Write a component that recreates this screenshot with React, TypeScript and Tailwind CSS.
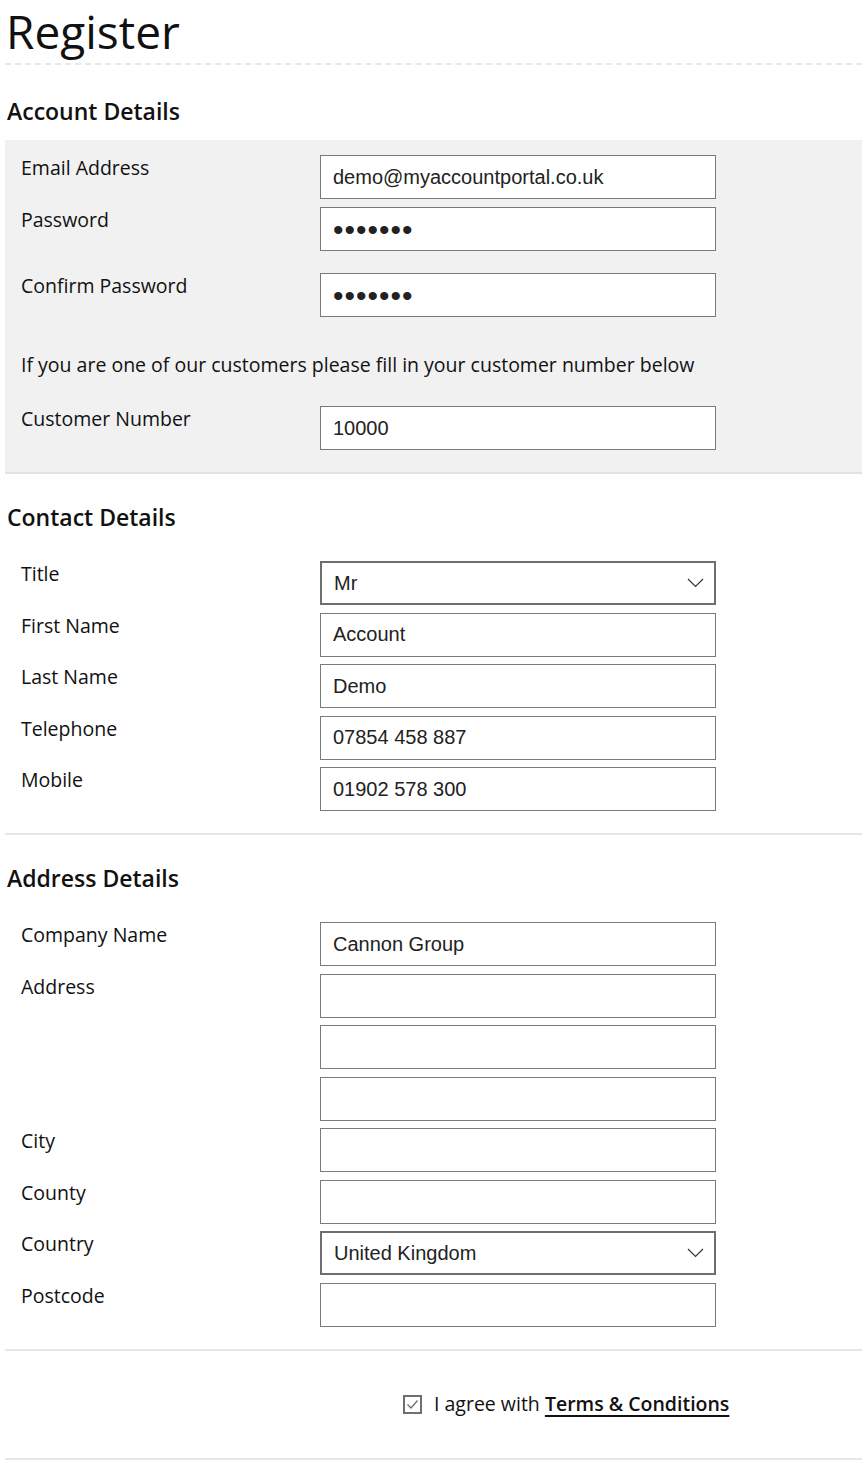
import { useState } from "react";

const label = "font-['Open_Sans',sans-serif] text-[19.5px] leading-[24px] text-[#111]";
const field =
  "h-[44px] w-[396px] border border-[#7a7a7a] bg-white px-[12px] font-['Liberation_Sans',Arial,sans-serif] text-[20px] text-[#222] outline-none";

export default function App() {
  const [agree, setAgree] = useState(true);

  return (
    <div className="min-h-screen w-[862px] bg-white pb-[20px] font-['Open_Sans',sans-serif] text-[#111]">
      <h1 className="h-[63px] pl-[6px] text-[46px] leading-[63px] font-normal">Register</h1>
      <div className="ml-[5px] border-b-[2px] border-dashed border-[#e8e8e8]" />

      <SectionTitle first>Account Details</SectionTitle>
      <section className="ml-[5px] border-b-[2px] border-[#e3e3e3] bg-[#f1f1f1] px-[16px] pt-[15px] pb-[22px]">
        <Row title="Email Address">
          <input className={field} defaultValue="demo@myaccountportal.co.uk" />
        </Row>
        <div className="h-[8px]" />
        <Row title="Password">
          <input type="password" className={field + " text-[30px] tracking-[1px]"} defaultValue="1234567" />
        </Row>
        <div className="h-[22px]" />
        <Row title="Confirm Password">
          <input type="password" className={field + " text-[30px] tracking-[1px]"} defaultValue="1234567" />
        </Row>
        <p className={label + " mt-[36px] mb-[29px]"}>
          If you are one of our customers please fill in your customer number below
        </p>
        <Row title="Customer Number">
          <input className={field} defaultValue="10000" />
        </Row>
      </section>

      <SectionTitle>Contact Details</SectionTitle>
      <section className="ml-[5px] flex flex-col gap-[7.5px] border-b-[2px] border-[#e6e6e6] px-[16px] pt-[15px] pb-[22px]">
        <Row title="Title">
          <Select value="Mr" options={["Mr", "Mrs", "Miss", "Ms", "Dr"]} />
        </Row>
        <Row title="First Name">
          <input className={field} defaultValue="Account" />
        </Row>
        <Row title="Last Name">
          <input className={field} defaultValue="Demo" />
        </Row>
        <Row title="Telephone">
          <input className={field} defaultValue="07854 458 887" />
        </Row>
        <Row title="Mobile">
          <input className={field} defaultValue="01902 578 300" />
        </Row>
      </section>

      <SectionTitle>Address Details</SectionTitle>
      <section className="ml-[5px] flex flex-col gap-[7.5px] border-b-[2px] border-[#e6e6e6] px-[16px] pt-[15px] pb-[22px]">
        <Row title="Company Name">
          <input className={field} defaultValue="Cannon Group" />
        </Row>
        <Row title="Address">
          <input className={field} />
        </Row>
        <Row title="">
          <input className={field} />
        </Row>
        <Row title="">
          <input className={field} />
        </Row>
        <Row title="City">
          <input className={field} />
        </Row>
        <Row title="County">
          <input className={field} />
        </Row>
        <Row title="Country">
          <Select value="United Kingdom" options={["United Kingdom", "Ireland", "France", "Germany"]} />
        </Row>
        <Row title="Postcode">
          <input className={field} />
        </Row>
      </section>

      <div className="ml-[5px] flex h-[109px] items-center border-b-[2px] border-[#e6e6e6]">
        <label className="ml-[398px] flex cursor-pointer items-center gap-[12px] text-[19.5px] leading-[24px]">
          <button
            type="button"
            onClick={() => setAgree(!agree)}
            className="flex h-[19px] w-[19px] items-center justify-center border-[2px] border-[#6f6f6f] bg-white"
            aria-label="I agree with Terms & Conditions"
          >
            {agree && (
              <svg width="13" height="11" viewBox="0 0 13 11" fill="none">
                <path d="M1.5 5.5 L5 9 L11.5 1.5" stroke="#6f6f6f" strokeWidth="1.3" />
              </svg>
            )}
          </button>
          <span>
            I agree with{" "}
            <a href="#" className="font-semibold underline decoration-[2px] underline-offset-[4px]">
              Terms &amp; Conditions
            </a>
          </span>
        </label>
      </div>
    </div>
  );
}

/* ---------- UI helpers ---------- */

function SectionTitle({ children, first }: { children: string; first?: boolean }) {
  return (
    <h2
      className={[
        "pl-[7px] pb-[16px] text-[23px] leading-[26px] font-semibold text-[#111]",
        first ? "pt-[33px]" : "pt-[30px]",
      ].join(" ")}
    >
      {children}
    </h2>
  );
}

function Row({ title, children }: { title: string; children: React.ReactNode }) {
  return (
    <div className="flex items-start">
      <div className={label + " w-[299px] pt-[1px]"}>{title}</div>
      {children}
    </div>
  );
}

function Select({ value, options }: { value: string; options: string[] }) {
  return (
    <div className="relative">
      <select
        defaultValue={value}
        className="h-[44px] w-[396px] appearance-none border-[2px] border-[#6e6e6e] bg-white px-[12px] font-['Liberation_Sans',Arial,sans-serif] text-[20px] text-[#222] outline-none"
      >
        {options.map((o) => (
          <option key={o} value={o}>
            {o}
          </option>
        ))}
      </select>
      <svg
        className="pointer-events-none absolute right-[12px] top-[17px]"
        width="17"
        height="10"
        viewBox="0 0 17 10"
        fill="none"
      >
        <path d="M1 1 L8.5 8.5 L16 1" stroke="#333" strokeWidth="1.2" />
      </svg>
    </div>
  );
}
